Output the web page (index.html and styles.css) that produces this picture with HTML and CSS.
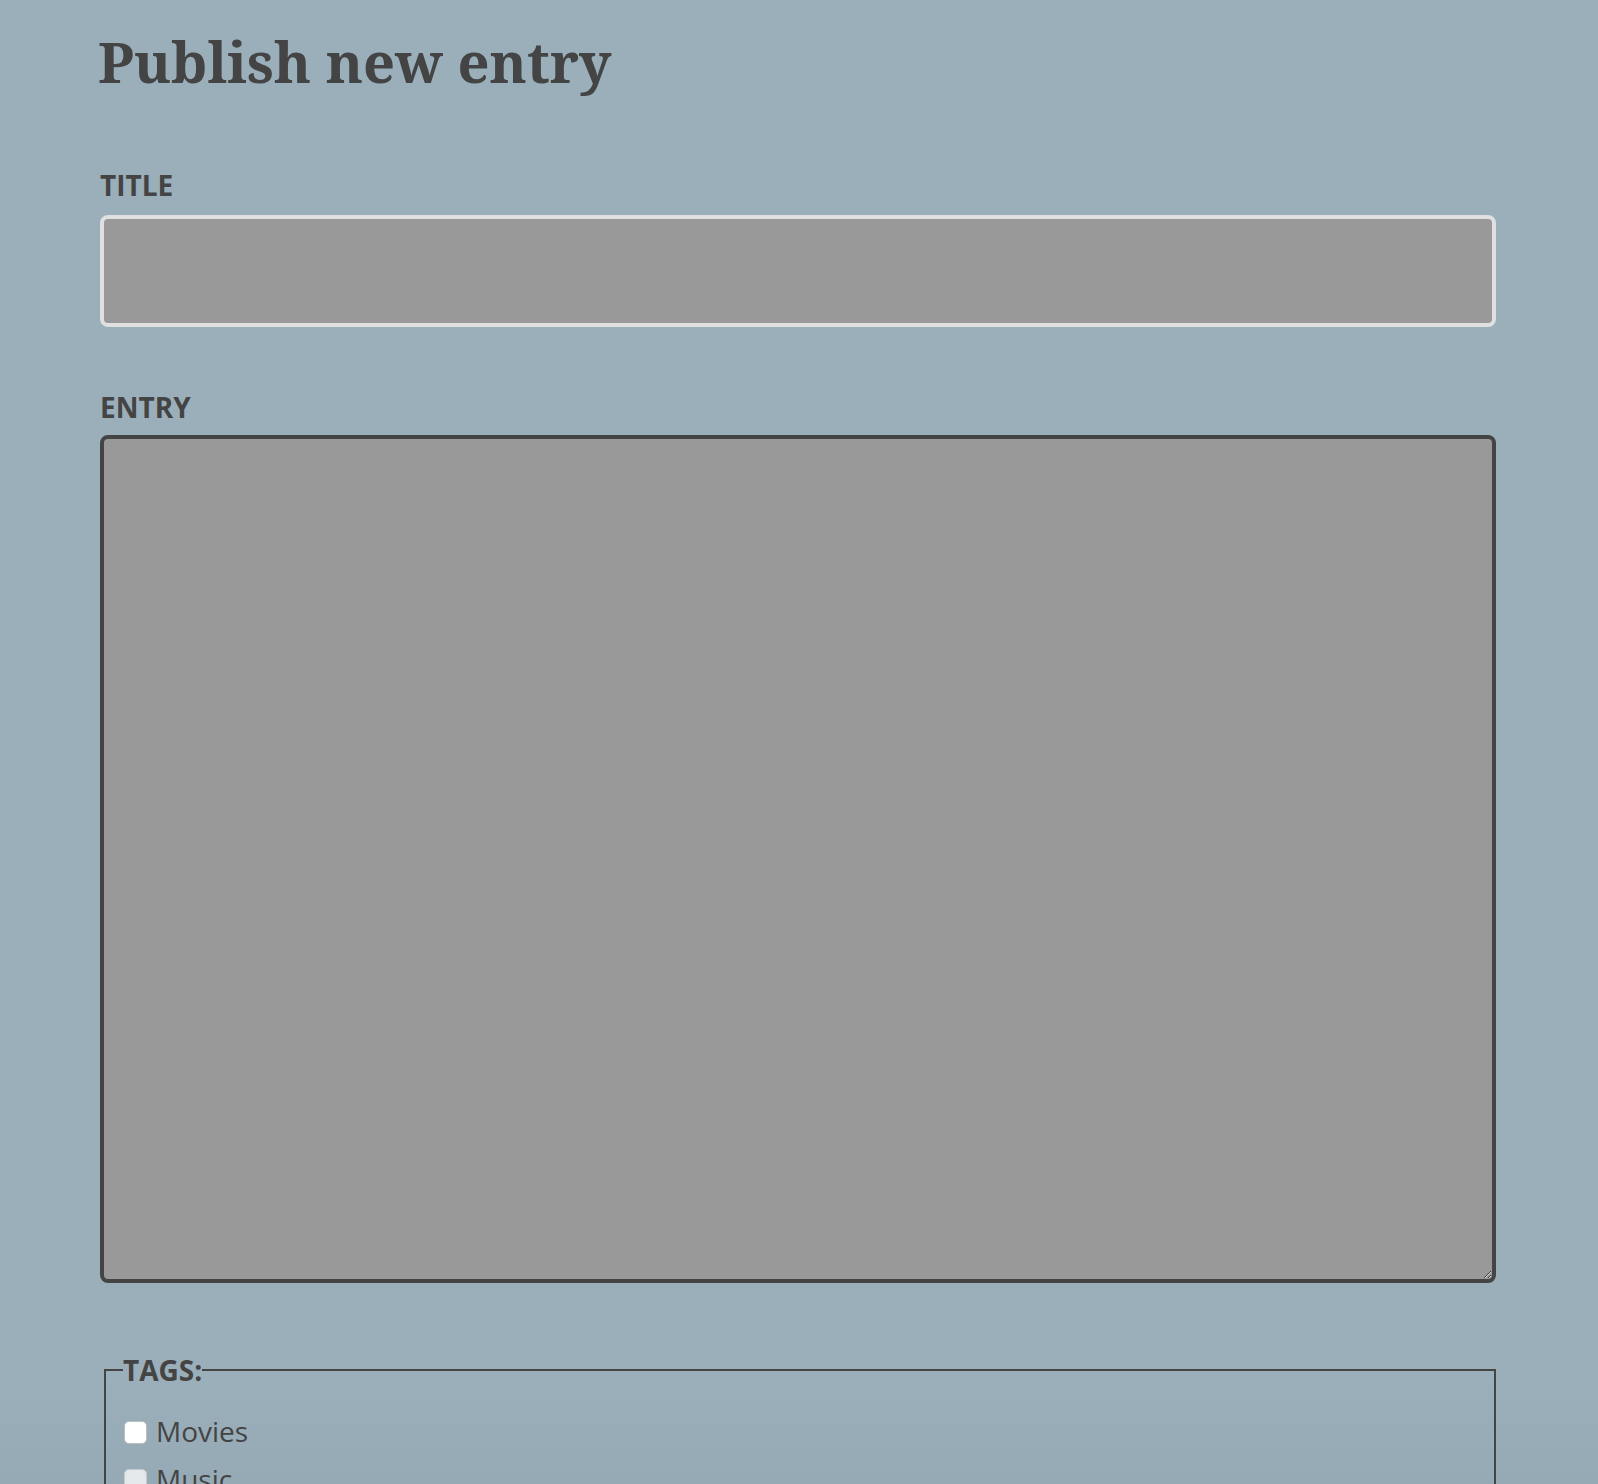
FILE: index.html
```html
<!DOCTYPE html>
<html lang="en">
<head>
<meta charset="utf-8">
<title>Publish new entry</title>
<link rel="stylesheet" href="styles.css">
</head>
<body>
<main class="page">
  <h1 class="heading">Publish new entry</h1>
  <form class="entry-form">
    <div class="field">
      <label class="field-label" for="title">Title</label>
      <input class="text-input" id="title" type="text">
    </div>
    <div class="field">
      <label class="field-label" for="entry">Entry</label>
      <textarea class="text-area" id="entry"></textarea>
    </div>
    <fieldset class="tags">
      <legend class="tags-legend">Tags:</legend>
      <label class="tag"><span class="box"></span>Movies</label>
      <label class="tag"><span class="box box-faded"></span>Music</label>
    </fieldset>
  </form>
</main>
</body>
</html>
```
FILE: styles.css
```css
html, body {
  margin: 0;
  padding: 0;
}
body {
  background: linear-gradient(to bottom, #9aafba 0, #9aafba 1380px, #96aab5 1484px);
  color: #444444;
  font-family: "Open Sans", "Liberation Sans", sans-serif;
  height: 1484px;
  overflow: hidden;
}
.page {
  padding: 0 102px 0 100px;
}
.heading {
  font-family: "Noto Serif", "DejaVu Serif", serif;
  font-weight: 700;
  font-size: 56px;
  line-height: 1.2;
  margin: 28px 0 0 -2px;
  color: #444444;
}
.entry-form {
  display: flex;
  flex-direction: column;
}
.field {
  display: flex;
  flex-direction: column;
}
.field-label {
  font-weight: 700;
  font-size: 28px;
  line-height: 38px;
  text-transform: uppercase;
  margin-top: 71px;
  margin-bottom: 11px;
  color: #444444;
}
.field + .field .field-label {
  margin-top: 61px;
  margin-bottom: 9px;
}
.text-input,
.text-area {
  box-sizing: border-box;
  width: 100%;
  background: #999999;
  border-radius: 8px;
  margin: 0;
  font: inherit;
  outline: none;
}
.text-input {
  height: 112px;
  border: 4px solid #e0e0e0;
}
.text-area {
  height: 848px;
  border: 4px solid #444444;
  resize: vertical;
  display: block;
}
.tags {
  margin: 68px 0 0 4px;
  border: 2px solid #444444;
  padding: 18px 20px 0 18px;
  min-width: 0;
}
.tags-legend {
  font-weight: 700;
  font-size: 28px;
  line-height: 38px;
  text-transform: uppercase;
  padding: 0;
  margin-left: -1px;
}
.tag {
  display: flex;
  align-items: center;
  gap: 9px;
  font-size: 28px;
  line-height: 48px;
}
.box {
  width: 21px;
  height: 21px;
  border-radius: 5px;
  background: #ffffff;
  border: 1px solid #b8bfc4;
  flex: none;
  margin-top: 3px;
}
.box-faded {
  background: #e4e8ea;
  border-color: #c4cace;
}
```
